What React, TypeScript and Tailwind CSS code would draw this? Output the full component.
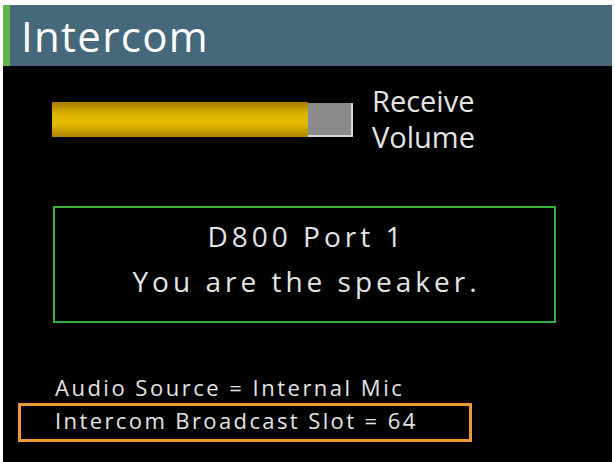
const font = { fontFamily: '"Open Sans", "Noto Sans", sans-serif' };

export default function App() {
  return (
    <div className="h-[462px] w-[615px] bg-white pl-[3px] pt-[5px]" style={font}>
      <div className="flex h-[457px] w-[609px] flex-col bg-black text-[#e4e4e4]">
        <Header title="Intercom" />
        <VolumeRow level={256} />
        <div className="ml-[50px] mt-[51px] flex h-[117px] w-[503px] flex-col items-center justify-center border-2 border-[#3aae3a] pb-[12px] pl-[4px] text-[28px] leading-[45px] tracking-[4px]">
          <span>D800 Port 1</span>
          <span>You are the speaker.</span>
        </div>
        <div className="mt-[51px] pl-[52px] text-[22px] leading-[26px] tracking-[2.5px]">Audio Source = Internal Mic</div>
        <div className="ml-[15px] mt-[3px] flex h-[39px] w-[454px] items-start border-[3px] border-[#ee9a32] pl-[34px] pt-px text-[22px] leading-[26px] tracking-[2.4px]">
          Intercom Broadcast Slot = 64
        </div>
      </div>
    </div>
  );
}

function Header({ title }: { title: string }) {
  return (
    <div className="flex h-[61px] items-center border-l-[7px] border-[#5fb548] bg-[#46687b] pl-[11px] text-[42px] leading-none tracking-[1.3px] text-white">
      {title}
    </div>
  );
}

function VolumeRow({ level }: { level: number }) {
  return (
    <div className="ml-[49px] mt-[17px] flex items-start">
      <div className="mt-[19px] flex h-[35px] w-[301px]">
        <div
          className="h-full bg-[linear-gradient(to_bottom,#a87a00,#dcb400_35%,#e2bc00_60%,#b08400)]"
          style={{ width: level }}
        />
        <div className="mt-px grow border-b-2 border-r-2 border-[#d8d8d8] bg-[#8c8c8c]" />
      </div>
      <div className="ml-[19px] text-[29px] leading-[36px]">
        <div>Receive</div>
        <div>Volume</div>
      </div>
    </div>
  );
}
